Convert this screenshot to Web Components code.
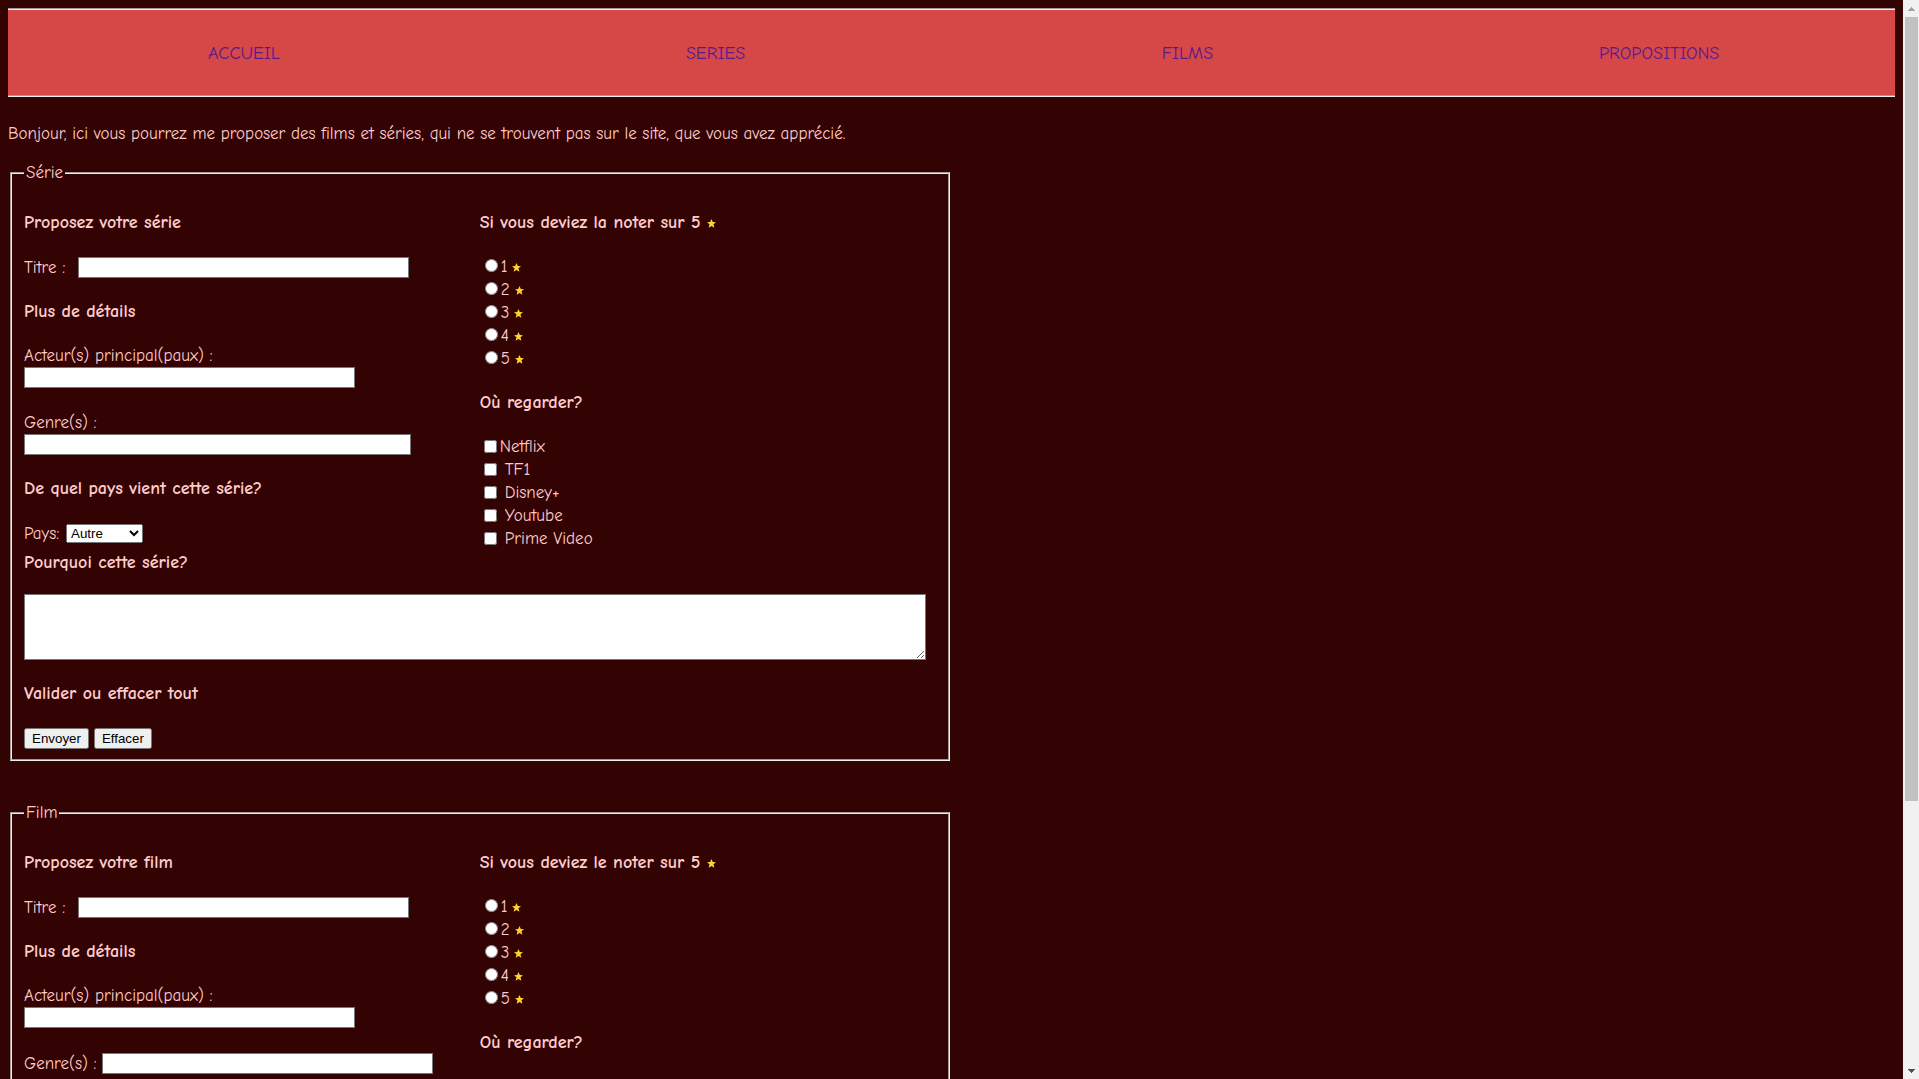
<!DOCTYPE html>
<html lang="fr">
<head>
<meta charset="utf-8">
<title>Propositions</title>
<style>
html { scrollbar-width: none; }
body { margin: 0; background: #330202; color: #ffcccc; font: 17px/23px "Comic Sans MS", "Comic Neue", "Open Sans", sans-serif; font-variant-ligatures: none; }
</style>
</head>
<body>
<app-page>
  <site-nav></site-nav>
  <p>Bonjour, ici vous pourrez me proposer des films et séries, qui ne se trouvent pas sur le site, que vous avez apprécié.</p>
  <proposal-form kind="serie"></proposal-form>
  <proposal-form kind="film"></proposal-form>
</app-page>
<script>
class AppPage extends HTMLElement {
  constructor() {
    super();
    this.attachShadow({ mode: 'open' }).innerHTML = `
      <style>
        :host { display: flex; align-items: flex-start; }
        main { flex: 1; min-width: 0; padding: 8px; }
        scroll-rail { position: sticky; top: 0; height: 100vh; }
        ::slotted(p) { margin: 25px 0 16px; }
      </style>
      <main><slot></slot></main>
      <scroll-rail></scroll-rail>`;
  }
}

class ScrollRail extends HTMLElement {
  constructor() {
    super();
    this.attachShadow({ mode: 'open' }).innerHTML = `
      <style>
        :host { display: flex; flex-direction: column; width: 16px; background: #f1f1f1; }
        svg { display: block; flex: none; width: 16px; height: 17px; }
        .track { flex: 1; padding: 0 1px 0 2px; }
        .thumb { height: 75%; background: #c1c1c1; }
      </style>
      <svg viewBox="0 0 16 17" shape-rendering="crispEdges"><path d="M8 7h1v1h1v1h1v1h1v1H5v-1h1V9h1V8h1z" fill="#a3a3a3"/></svg>
      <div class="track"><div class="thumb"></div></div>
      <svg viewBox="0 0 16 17" shape-rendering="crispEdges"><path d="M5 7h7v1h-1v1h-1v1H9v1H8v-1H7V9H6V8H5z" fill="#505050"/></svg>`;
  }
}

class SiteNav extends HTMLElement {
  constructor() {
    super();
    const links = ['ACCUEIL', 'SERIES', 'FILMS', 'PROPOSITIONS'];
    this.attachShadow({ mode: 'open' }).innerHTML = `
      <style>
        :host { display: block; }
        nav { display: flex; background: #d64847; border: solid #f0f0f0; border-width: 2px 0; border-style: groove; }
        a { flex: 1; padding: 32px 0 30px; text-align: center; text-decoration: none; color: #551a8b; font-size: 18px; }
      </style>
      <nav>${links.map(t => `<a href="#${t.toLowerCase()}">${t}</a>`).join('')}</nav>`;
  }
}

class GoldStar extends HTMLElement {
  constructor() {
    super();
    this.attachShadow({ mode: 'open' }).innerHTML = `
      <style>
        :host { display: inline-block; }
        svg { display: block; width: 9px; height: 9px; }
      </style>
      <svg viewBox="0 0 18 18"><path d="M9 0l2.600 6.200 6.400.3-5 4.200 1.700 6.800L9 13.800l-5.700 3.700 1.700-6.800-5-4.200 6.400-.3z" fill="#fdd42f"/></svg>`;
  }
}

const TEXTS = {
  serie: { legend: 'Série', name: 'série', rate: 'la', this: 'cette série' },
  film: { legend: 'Film', name: 'film', rate: 'le', this: 'ce film' }
};

class ProposalForm extends HTMLElement {
  connectedCallback() {
    if (this.shadowRoot) return;
    const kind = this.getAttribute('kind');
    const t = TEXTS[kind];
    const radios = [1, 2, 3, 4, 5].map(n =>
      `<div class="choice"><input type="radio" name="note" id="n${n}"><label for="n${n}">${n}</label><gold-star></gold-star></div>`).join('');
    const places = ['Netflix', 'TF1', 'Disney+', 'Youtube', 'Prime Video'].map((p, i) =>
      `<div class="choice ${i ? 'spaced' : ''}"><input type="checkbox" id="c${i}"><label for="c${i}">${p}</label></div>`).join('');
    this.attachShadow({ mode: 'open' }).innerHTML = `
      <style>
        :host { display: block; width: 50%; margin-bottom: 40px; }
        form { margin: 0; }
        fieldset { margin: 0 2px; padding: 6px 12px 10px; border: 2px groove #f0f0f0; }
        legend { padding: 0 2px; }
        h4 { margin: 21px 0; font-size: 18px; }
        .columns { display: flex; padding-bottom: 1px; }
        .columns > div { flex: 1; min-width: 0; }
        .field { display: flex; gap: 5px; height: 24px; align-items: center; }
        .stacked { display: block; height: auto; padding-bottom: 1px; margin-bottom: 22px; }
        .stacked label { display: block; }
        .stacked.last { margin-bottom: 0; }
        label[for=titre] { min-width: 49px; }
        label[for=pays] { min-width: 37px; }
        input[type=text] { display: block; box-sizing: border-box; width: 331px; height: 21px; }
        input[type=text].wide { width: 387px; }
        input[type=text], textarea { margin: 0; padding: 1px 2px; border: 1px solid #767676; background: #fff; }
        select { width: 77px; height: 19px; margin: 0; }
        .choice { display: flex; align-items: center; height: 23px; }
        .choice input { width: 13px; height: 13px; margin: 0 3px 2px 5px; }
        .choice input[type=checkbox] { margin-left: 4px; margin-bottom: 0; }
        .spaced input { margin-right: 8px; }
        .choice gold-star { margin: 2px 0 0 5px; }
        h4.why { margin: 0 0 20px; }
        textarea { display: block; box-sizing: border-box; width: 99%; height: 66px; }
        textarea + h4 { margin-top: 22px; }
        .actions { display: flex; gap: 5px; padding-top: 2px; }
        button { height: 21px; margin: 0; padding: 1px 6px; }
      </style>
      <form>
        <fieldset>
          <legend>${t.legend}</legend>
          <div class="columns">
            <div>
              <h4>Proposez votre ${t.name}</h4>
              <div class="field"><label for="titre">Titre :</label><input type="text" id="titre"></div>
              <h4>Plus de détails</h4>
              <div class="field stacked"><label for="acteurs">Acteur(s) principal(paux) :</label><input type="text" id="acteurs"></div>
              ${kind === 'serie'
                ? '<div class="field stacked last"><label for="genres">Genre(s) :</label><input type="text" class="wide" id="genres"></div>'
                : '<div class="field"><label for="genres">Genre(s) :</label><input type="text" id="genres"></div>'}
              <h4>De quel pays vient ${t.this}?</h4>
              <div class="field"><label for="pays">Pays:</label><select id="pays"><option>Autre</option></select></div>
            </div>
            <div>
              <h4>Si vous deviez ${t.rate} noter sur 5 <gold-star></gold-star></h4>
              ${radios}
              <h4>Où regarder?</h4>
              ${places}
            </div>
          </div>
          <h4 class="why"><label for="avis">Pourquoi ${t.this}?</label></h4>
          <textarea id="avis"></textarea>
          <h4>Valider ou effacer tout</h4>
          <div class="actions"><button type="submit">Envoyer</button><button type="reset">Effacer</button></div>
        </fieldset>
      </form>`;
  }
}

customElements.define('gold-star', GoldStar);
customElements.define('scroll-rail', ScrollRail);
customElements.define('site-nav', SiteNav);
customElements.define('proposal-form', ProposalForm);
customElements.define('app-page', AppPage);
</script>
</body>
</html>
